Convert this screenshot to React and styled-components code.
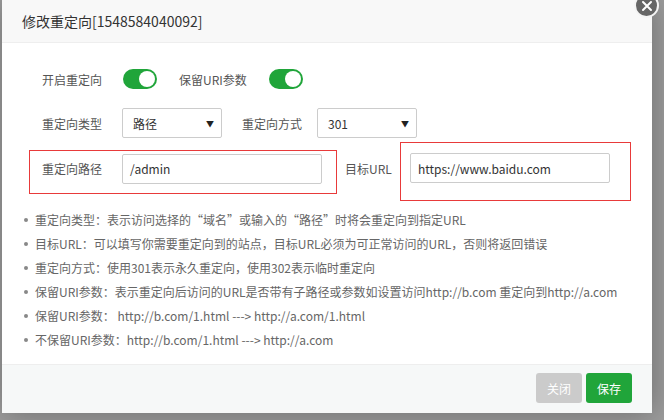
import React from 'react';
import styled, { createGlobalStyle } from 'styled-components';

const GlobalStyle = createGlobalStyle`
  html, body { margin: 0; padding: 0; background: #9d9d9d; }
  body { font-family: "Noto Sans CJK SC", "Liberation Sans", sans-serif; }
  * { box-sizing: border-box; }
`;

const Screen = styled.div`
  width: 664px;
  height: 420px;
  overflow: hidden;
  padding-left: 2px;
  background: #9d9d9d;
`;

const Dialog = styled.div`
  position: relative;
  width: 650px;
  height: 413px;
  background: #fff;
  display: flex;
  flex-direction: column;
  box-shadow: 1px 1px 30px rgba(0, 0, 0, 0.3);
`;

const Header = styled.div`
  height: 43px;
  line-height: 42px;
  padding-left: 20px;
  background: #f8f8f8;
  border-bottom: 1px solid #eee;
  font-size: 14px;
  color: #333;
`;

const CloseBtn = styled.span`
  position: absolute;
  right: -7px;
  top: -7px;
  width: 25px;
  height: 25px;
  border-radius: 50%;
  background: #666;
  border: 2px solid #f4f4f4;
  display: flex;
  align-items: center;
  justify-content: center;
`;

const Body = styled.div`
  flex: 1;
  padding-top: 26px;
`;

const Row = styled.div`
  display: flex;
  align-items: center;
  padding-left: ${p => p.$pl || 40}px;
  margin-bottom: ${p => p.$mb || 0}px;
`;

const Label = styled.span`
  width: ${p => p.$w}px;
  flex-shrink: 0;
  font-size: 12px;
  color: #555;
  margin-left: ${p => p.$ml || 0}px;
  margin-bottom: ${p => p.$lift || 0}px;
`;

const Toggle = styled.span`
  position: relative;
  width: 34px;
  height: 20px;
  border-radius: 10px;
  background: #20a53a;
  flex-shrink: 0;
  &::after {
    content: '';
    position: absolute;
    right: 2px;
    top: 2px;
    width: 16px;
    height: 16px;
    border-radius: 50%;
    background: #fff;
  }
`;

const Select = styled.div`
  width: 100px;
  height: 30px;
  border: 1px solid #ccc;
  border-radius: 2px;
  display: flex;
  align-items: center;
  justify-content: space-between;
  padding: 0 7px 0 10px;
  font-size: 12px;
  color: #333;
  flex-shrink: 0;
  span { font-size: 8px; color: #222; }
`;

const Input = styled.div`
  width: ${p => p.$w}px;
  height: 30px;
  border: 1px solid #ccc;
  border-radius: 2px;
  display: flex;
  align-items: center;
  padding-left: 7px;
  font-size: 12px;
  color: #333;
  flex-shrink: 0;
`;

const Mark = styled.div`
  display: flex;
  align-items: center;
  border: 1px solid #e83a3a;
  padding: ${p => p.$pad};
  flex-shrink: 0;
`;

const Tips = styled.ul`
  list-style: none;
  margin: 7px 0 0;
  padding: 0 0 0 22px;
`;

const Tip = styled.li`
  position: relative;
  height: 24px;
  line-height: 24px;
  padding-left: 11px;
  font-size: 12px;
  color: #666;
  white-space: nowrap;
  &::before {
    content: '';
    position: absolute;
    left: 0;
    top: 10px;
    width: 4px;
    height: 4px;
    border-radius: 50%;
    background: #888;
  }
`;

const Footer = styled.div`
  height: 49px;
  border-top: 1px solid #eee;
  background: #f6f8f8;
  display: flex;
  justify-content: flex-end;
  gap: 4px;
  padding: 8px 20px 0 0;
`;

const Button = styled.button`
  width: 46px;
  height: 30px;
  border: none;
  border-radius: 3px;
  background: ${p => (p.$primary ? '#20a53a' : '#cbcbcb')};
  color: #fff;
  font-family: inherit;
  font-size: 12px;
  padding: 0;
`;

const tips = [
  '重定向类型：表示访问选择的“域名”或输入的“路径”时将会重定向到指定URL',
  '目标URL：可以填写你需要重定向到的站点，目标URL必须为可正常访问的URL，否则将返回错误',
  '重定向方式：使用301表示永久重定向，使用302表示临时重定向',
  '保留URI参数：表示重定向后访问的URL是否带有子路径或参数如设置访问http://b.com 重定向到http://a.com',
  '保留URI参数：  http://b.com/1.html ---> http://a.com/1.html',
  '不保留URI参数：http://b.com/1.html ---> http://a.com',
];

export default function App() {
  return (
    <Screen>
      <GlobalStyle />
      <Dialog>
        <Header>修改重定向[1548584040092]</Header>
        <CloseBtn>
          <svg width="12" height="12" viewBox="0 0 12 12">
            <path d="M2 2L10 10M10 2L2 10" stroke="#fff" strokeWidth="2" strokeLinecap="round" />
          </svg>
        </CloseBtn>
        <Body>
          <Row $mb={19}>
            <Label $w={81}>开启重定向</Label>
            <Toggle />
            <Label $w={90} $ml={22}>保留URI参数</Label>
            <Toggle />
          </Row>
          <Row $mb={4}>
            <Label $w={80}>重定向类型</Label>
            <Select>路径<span>▼</span></Select>
            <Label $w={75} $ml={20}>重定向方式</Label>
            <Select>301<span>▼</span></Select>
          </Row>
          <Row $pl={27}>
            <Mark $pad="3px 14px 9px 12px">
              <Label $w={80}>重定向路径</Label>
              <Input $w={200}>/admin</Input>
            </Mark>
            <Label $w={55} $ml={8} $lift={7}>目标URL</Label>
            <Mark $pad="10px 20px 17px 9px">
              <Input $w={200}>https://www.baidu.com</Input>
            </Mark>
          </Row>
          <Tips>
            {tips.map(t => (
              <Tip key={t}>{t}</Tip>
            ))}
          </Tips>
        </Body>
        <Footer>
          <Button>关闭</Button>
          <Button $primary>保存</Button>
        </Footer>
      </Dialog>
    </Screen>
  );
}
